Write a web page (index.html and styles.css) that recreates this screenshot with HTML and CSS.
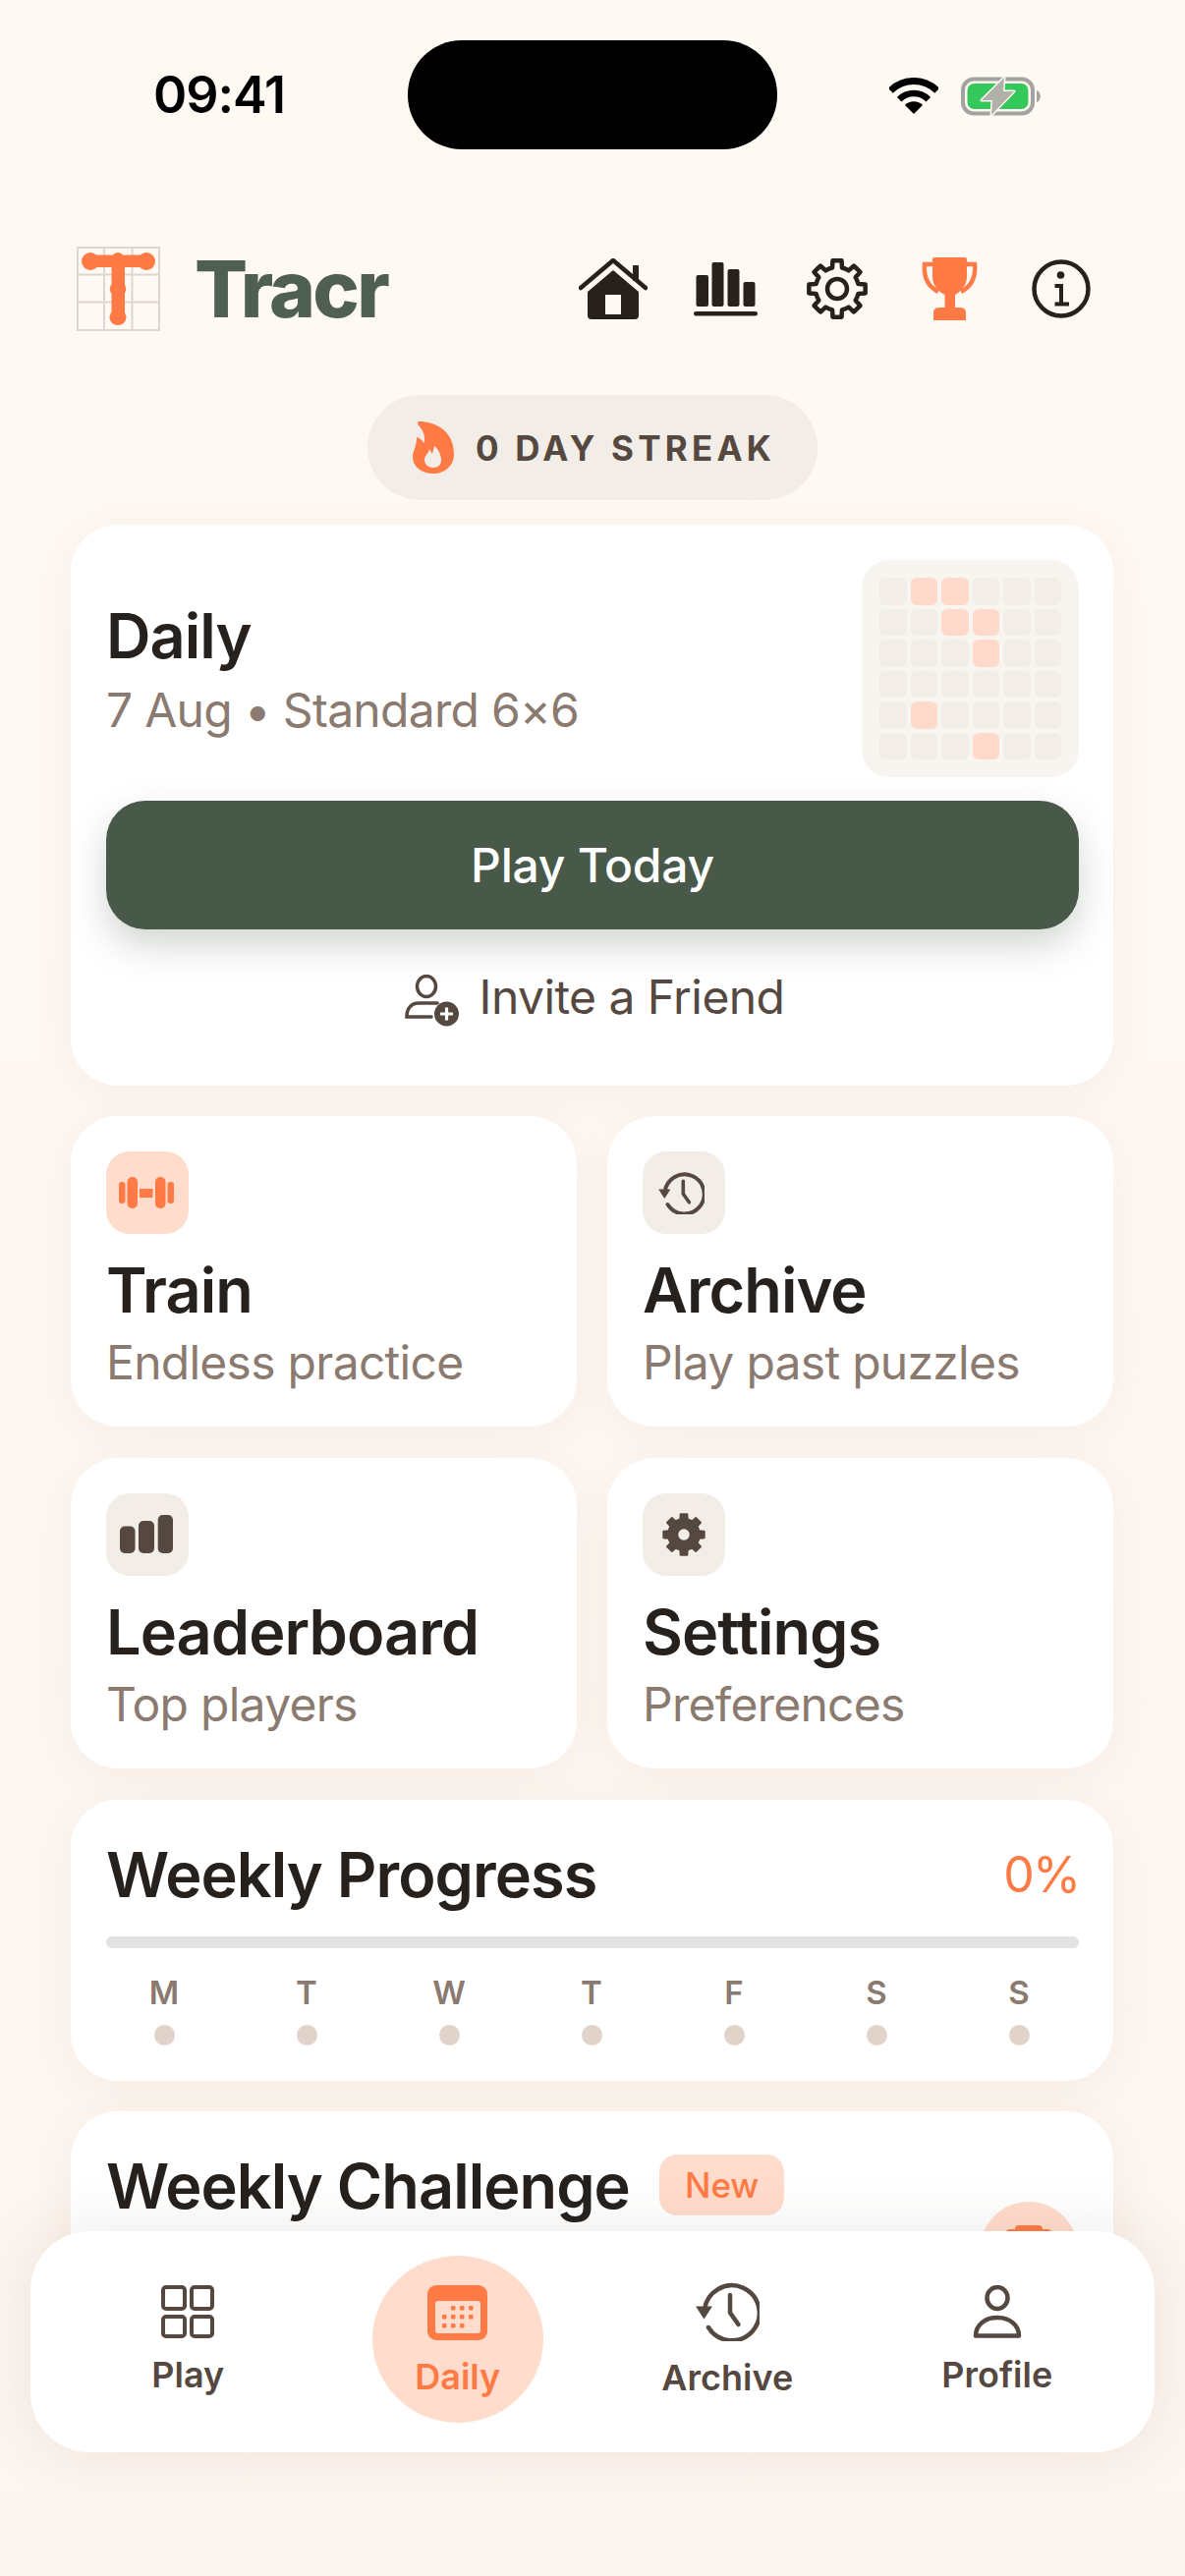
FILE: index.html
```html
<!DOCTYPE html>
<html lang="en">
<head>
  <meta charset="UTF-8" />
  <meta name="viewport" content="width=device-width, initial-scale=1.0" />
  <title>Tracr</title>
  <link rel="stylesheet" href="styles.css">
</head>
<body>
  <div class="status-bar">
    <span class="time">09:41</span>
    <div class="island"></div>
    <div class="status-icons">
      <svg width="50" height="37" viewBox="0 0 50 37">
        <path d="M1.3 13.3A33.5 33.5 0 0 1 48.7 13.3" fill="none" stroke="#000" stroke-width="7"/>
        <path d="M10.2 22.2A21 21 0 0 1 39.8 22.2" fill="none" stroke="#000" stroke-width="6.5"/>
        <path d="M25 37L16 28A12.7 12.7 0 0 1 34 28Z" fill="#000"/>
      </svg>
      <svg width="82" height="40" viewBox="0 0 82 40">
        <rect x="2" y="2.5" width="71" height="35" rx="11" fill="none" stroke="#a5a39f" stroke-width="4"/>
        <rect x="6.5" y="7" width="62" height="26" rx="7" fill="#34c759"/>
        <path d="M77 14C82 15 82 25 77 26Z" fill="#a5a39f"/>
        <path d="M44 1L21 24H32L31 39L54 15H43Z" fill="#b2b0aa" stroke="#fff8f3" stroke-width="3" paint-order="stroke" stroke-linejoin="round"/>
      </svg>
    </div>
  </div>

  <header class="top-header">
    <div class="brand">
      <svg class="logo" width="85" height="86" viewBox="0 0 85 86">
        <g fill="none" stroke="#ddd6d3" stroke-width="2">
          <rect x="1" y="1" width="83" height="84"/>
          <path d="M28 1V85M56.5 1V85M1 28.5H84M1 56.5H84"/>
        </g>
        <g fill="#ff7a45">
          <rect x="12" y="8.5" width="60" height="12.5"/>
          <rect x="35.5" y="12" width="13.5" height="58"/>
          <circle cx="14" cy="15" r="9"/>
          <circle cx="71" cy="15" r="9"/>
          <circle cx="42" cy="12" r="6"/>
          <ellipse cx="42" cy="43" rx="8.3" ry="7.5"/>
          <ellipse cx="42" cy="72" rx="8.5" ry="8"/>
        </g>
      </svg>
      <span class="brand-name">Tracr</span>
    </div>
    <nav class="top-nav">
      <svg width="70" height="62" viewBox="0 0 70 62">
        <path d="M2 30L35 2L68 30" fill="none" stroke="#26211d" stroke-width="4.5" stroke-linecap="round" stroke-linejoin="round"/>
        <rect x="55" y="7" width="6" height="16" rx="1" fill="#26211d"/>
        <path fill-rule="evenodd" d="M35 12L61 34V58Q61 62 57 62H13Q9 62 9 58V34ZM27 37V57H43V37Z" fill="#26211d"/>
      </svg>
      <svg width="65" height="55" viewBox="0 0 65 55" fill="#26211d">
        <rect x="2.5" y="13" width="12.5" height="32" rx="2"/>
        <rect x="18.5" y="0" width="12" height="45" rx="2"/>
        <rect x="34.5" y="7" width="12" height="38" rx="2"/>
        <rect x="50.5" y="20" width="12" height="25" rx="2"/>
        <rect x="0" y="50" width="65" height="4.5" rx="2.2"/>
      </svg>
      <svg width="64" height="64" viewBox="-32 -32 64 64">
        <path d="M-4.95 -21.44L-4.54 -28.64H4.54L4.95 -21.44A22 22 0 0 1 11.66 -18.66L17.04 -23.46L23.46 -17.04L18.66 -11.66A22 22 0 0 1 21.44 -4.95L28.64 -4.54V4.54L21.44 4.95A22 22 0 0 1 18.66 11.66L23.46 17.04L17.04 23.46L11.66 18.66A22 22 0 0 1 4.95 21.44L4.54 28.64H-4.54L-4.95 21.44A22 22 0 0 1 -11.66 18.66L-17.04 23.46L-23.46 17.04L-18.66 11.66A22 22 0 0 1 -21.44 4.95L-28.64 4.54V-4.54L-21.44 -4.95A22 22 0 0 1 -18.66 -11.66L-23.46 -17.04L-17.04 -23.46L-11.66 -18.66A22 22 0 0 1 -4.95 -21.44Z" fill="none" stroke="#26211d" stroke-width="4.5" stroke-linejoin="round"/>
        <circle r="10" fill="none" stroke="#26211d" stroke-width="4.5"/>
      </svg>
      <svg width="57" height="64" viewBox="0 0 57 64">
        <path d="M13 0H44Q46 0 46 2V20C46 30 38 36 34 38V51H38Q45 51 45 56V64H12V56Q12 51 19 51H23.5V38C19 36 11 30 11 20V2Q11 0 13 0Z" fill="#ff7a45"/>
        <path d="M11 7H3C2 18 5 29 17 35M46 7H54C55 18 52 29 40 35" fill="none" stroke="#ff7a45" stroke-width="4.5"/>
      </svg>
      <svg width="60" height="60" viewBox="0 0 60 60">
        <circle cx="30" cy="30" r="27.5" fill="none" stroke="#26211d" stroke-width="4.5"/>
        <circle cx="29.5" cy="16" r="3.8" fill="#26211d"/>
        <path d="M23.5 27H30V45M23.5 45.5H38" fill="none" stroke="#26211d" stroke-width="4"/>
      </svg>
    </nav>
  </header>

  <div class="streak-wrap">
    <div class="streak">
      <svg width="42" height="53" viewBox="0 0 42 53">
        <path d="M6 0C24 0 42 10 42 33C42 45 33 53 21 53C9 53 0 46 0 36C0 30 4 26 4 16C8 17 10 20 12 22C13 14 10 8 6 4Q4 1 6 0Z" fill="#ff7a45"/>
        <path d="M21 47C15 47 12 43 12 39C12 35 16 33 17 28L20 33L22 25C27 29 29 35 29 39C29 44 26 47 21 47Z" fill="#f3ede8"/>
      </svg>
      <span>0 DAY STREAK</span>
    </div>
  </div>

  <main class="content">
    <section class="card daily">
      <div class="daily-top">
        <div>
          <div class="title">Daily</div>
          <div class="sub">7 Aug • Standard 6×6</div>
        </div>
        <div class="mini-grid">
          <i></i><i class="on"></i><i class="on"></i><i></i><i></i><i></i>
          <i></i><i></i><i class="on"></i><i class="on"></i><i></i><i></i>
          <i></i><i></i><i></i><i class="on"></i><i></i><i></i>
          <i></i><i></i><i></i><i></i><i></i><i></i>
          <i></i><i class="on"></i><i></i><i></i><i></i><i></i>
          <i></i><i></i><i></i><i class="on"></i><i></i><i></i>
        </div>
      </div>
      <button class="play-btn">Play Today</button>
      <div class="invite">
        <svg width="55" height="53" viewBox="0 0 55 53">
          <ellipse cx="22" cy="12" rx="9.5" ry="10.5" fill="none" stroke="#554840" stroke-width="3.5"/>
          <path d="M33 29H14C7 29 2 34 2 43H27" fill="none" stroke="#554840" stroke-width="3.5" stroke-linecap="round"/>
          <circle cx="42.5" cy="40" r="12.5" fill="#554840"/>
          <path d="M42.5 33.5V46.5M36 40H49" stroke="#fff" stroke-width="3.2"/>
        </svg>
        <span>Invite a Friend</span>
      </div>
    </section>

    <div class="tile-grid">
      <section class="card tile">
        <div class="tile-icon peach">
          <svg width="84" height="84" viewBox="0 0 84 84" fill="#ff7a45">
            <rect x="13" y="31" width="6.5" height="22" rx="3"/>
            <rect x="21.5" y="26" width="10.5" height="32" rx="5"/>
            <rect x="34" y="38" width="13.5" height="9"/>
            <rect x="50" y="26" width="10.5" height="32" rx="5"/>
            <rect x="62.5" y="31" width="6.5" height="22" rx="3"/>
          </svg>
        </div>
        <div class="title">Train</div>
        <div class="sub">Endless practice</div>
      </section>
      <section class="card tile">
        <div class="tile-icon">
          <svg class="clock-small" width="47" height="43" viewBox="0 0 65 60">
            <path d="M9 28A28 28 0 1 1 13 46" fill="none" stroke="#554840" stroke-width="5.5" stroke-linecap="round"/>
            <path d="M0 24.5H17L8.5 37.5Z" fill="#554840"/>
            <path d="M35 13V31L43.5 43" fill="none" stroke="#554840" stroke-width="5" stroke-linecap="round" stroke-linejoin="round"/>
          </svg>
        </div>
        <div class="title">Archive</div>
        <div class="sub">Play past puzzles</div>
      </section>
      <section class="card tile">
        <div class="tile-icon">
          <svg width="84" height="84" viewBox="0 0 84 84" fill="#554840">
            <rect x="14" y="33.5" width="15.5" height="27.5" rx="5"/>
            <rect x="33" y="28" width="16" height="33" rx="5"/>
            <rect x="52.7" y="22" width="15.3" height="39" rx="5"/>
          </svg>
        </div>
        <div class="title">Leaderboard</div>
        <div class="sub">Top players</div>
      </section>
      <section class="card tile">
        <div class="tile-icon">
          <svg width="46" height="46" viewBox="-32 -32 64 64">
            <path fill-rule="evenodd" d="M-4.95 -21.44L-4.54 -28.64H4.54L4.95 -21.44A22 22 0 0 1 11.66 -18.66L17.04 -23.46L23.46 -17.04L18.66 -11.66A22 22 0 0 1 21.44 -4.95L28.64 -4.54V4.54L21.44 4.95A22 22 0 0 1 18.66 11.66L23.46 17.04L17.04 23.46L11.66 18.66A22 22 0 0 1 4.95 21.44L4.54 28.64H-4.54L-4.95 21.44A22 22 0 0 1 -11.66 18.66L-17.04 23.46L-23.46 17.04L-18.66 11.66A22 22 0 0 1 -21.44 4.95L-28.64 4.54V-4.54L-21.44 -4.95A22 22 0 0 1 -18.66 -11.66L-23.46 -17.04L-17.04 -23.46L-11.66 -18.66A22 22 0 0 1 -4.95 -21.44ZM0 -9.5A9.5 9.5 0 1 0 0 9.5A9.5 9.5 0 1 0 0 -9.5Z" fill="#554840" stroke="#554840" stroke-width="3" stroke-linejoin="round"/>
          </svg>
        </div>
        <div class="title">Settings</div>
        <div class="sub">Preferences</div>
      </section>
    </div>

    <section class="card weekly">
      <div class="weekly-head">
        <div class="title">Weekly Progress</div>
        <div class="percent">0%</div>
      </div>
      <div class="progress"></div>
      <div class="days">
        <div class="day"><span>M</span><i></i></div>
        <div class="day"><span>T</span><i></i></div>
        <div class="day"><span>W</span><i></i></div>
        <div class="day"><span>T</span><i></i></div>
        <div class="day"><span>F</span><i></i></div>
        <div class="day"><span>S</span><i></i></div>
        <div class="day"><span>S</span><i></i></div>
      </div>
    </section>

    <section class="card challenge">
      <div class="title">Weekly Challenge</div>
      <span class="badge">New</span>
      <div class="challenge-icon">
        <svg width="46" height="40" viewBox="0 0 46 40" fill="#ff7a45">
          <rect x="9" y="0" width="28" height="12" rx="4"/>
          <rect x="0" y="4" width="46" height="36" rx="4"/>
        </svg>
      </div>
    </section>
  </main>

  <nav class="tab-bar">
    <div class="tab">
      <svg width="54" height="54" viewBox="0 0 54 54" fill="none" stroke="#554840" stroke-width="4">
        <rect x="2" y="2" width="22" height="22" rx="3"/>
        <rect x="31" y="2" width="21" height="22" rx="3"/>
        <rect x="2" y="32" width="22" height="20" rx="3"/>
        <rect x="31" y="32" width="21" height="20" rx="3"/>
      </svg>
      <span>Play</span>
    </div>
    <div class="tab active">
      <svg width="61" height="56" viewBox="0 0 61 56">
        <rect width="61" height="56" rx="9" fill="#ff7a45"/>
        <rect x="8" y="16" width="46" height="33" rx="3" fill="#ffdccb"/>
        <g fill="#ff7a45">
          <rect x="24" y="21" width="4.5" height="4.5" rx="1"/><rect x="33" y="21" width="4.5" height="4.5" rx="1"/><rect x="42" y="21" width="4.5" height="4.5" rx="1"/>
          <rect x="15" y="30" width="4.5" height="4.5" rx="1"/><rect x="24" y="30" width="4.5" height="4.5" rx="1"/><rect x="33" y="30" width="4.5" height="4.5" rx="1"/><rect x="42" y="30" width="4.5" height="4.5" rx="1"/>
          <rect x="15" y="39" width="4.5" height="4.5" rx="1"/><rect x="24" y="39" width="4.5" height="4.5" rx="1"/><rect x="33" y="39" width="4.5" height="4.5" rx="1"/>
        </g>
      </svg>
      <span>Daily</span>
    </div>
    <div class="tab">
      <svg width="65" height="60" viewBox="0 0 65 60">
        <path d="M9 28A28 28 0 1 1 13 46" fill="none" stroke="#554840" stroke-width="4.5" stroke-linecap="round"/>
        <path d="M0 24.5H17L8.5 37.5Z" fill="#554840"/>
        <path d="M35 13V31L43.5 43" fill="none" stroke="#554840" stroke-width="4.5" stroke-linecap="round" stroke-linejoin="round"/>
      </svg>
      <span>Archive</span>
    </div>
    <div class="tab">
      <svg width="50" height="54" viewBox="0 0 50 54" fill="none" stroke="#554840" stroke-width="4.5" stroke-linejoin="round">
        <ellipse cx="25" cy="13" rx="10.5" ry="11"/>
        <path d="M3 51.5C3 40 13 33 25 33C37 33 47 40 47 51.5Z"/>
      </svg>
      <span>Profile</span>
    </div>
  </nav>
</body>
</html>
```
FILE: styles.css
```css
* { box-sizing: border-box; }
html, body { margin: 0; padding: 0; }
body { position: relative; width: 1206px; height: 2622px; overflow: hidden; padding-top: 41px; font-family: Inter, "Noto Sans", sans-serif; color: #26211d; background: linear-gradient(#fff9f4, #fdf5ef); }

.status-bar { display: flex; align-items: center; height: 111px; padding-left: 156px; }
.time { width: 259px; font-size: 52px; font-weight: 600; color: #000; letter-spacing: -0.02em; }
.island { width: 376px; height: 111px; border-radius: 55px; background: #000; }
.status-icons { display: flex; align-items: center; gap: 23px; margin-left: 114px; margin-top: 2px; }

.top-header { display: flex; justify-content: space-between; align-items: center; height: 86px; margin-top: 99px; padding: 0 69px 0 78px; }
.brand { display: flex; align-items: center; gap: 35px; }
.logo { display: block; }
.brand-name { font-size: 80px; font-weight: 800; color: #4f6052; letter-spacing: -0.035em; line-height: 86px; }
.top-nav { display: grid; grid-template-columns: repeat(5, 114px); justify-items: center; align-items: center; }

.streak-wrap { display: flex; justify-content: center; margin-top: 65px; }
.streak { display: flex; align-items: center; gap: 22px; height: 107px; padding: 0 43px 0 46px; border-radius: 54px; background: #f3ede8; font-size: 35px; font-weight: 700; letter-spacing: 0.12em; color: #554840; }

.content { display: flex; flex-direction: column; gap: 31px; margin: 25px 73px 0 72px; }
.card { background: #fff; border-radius: 48px; box-shadow: 0 8px 44px rgba(120, 80, 50, 0.06); }
.title { font-size: 63px; line-height: 72px; font-weight: 600; letter-spacing: -0.015em; color: #26211d; }
.sub { font-size: 48px; line-height: 56px; letter-spacing: -0.015em; color: #8a7a70; }

.daily { height: 571px; padding: 36px 35px 0 36px; }
.daily-top { display: flex; justify-content: space-between; align-items: center; }
.daily-top .title { margin-bottom: 12px; }
.mini-grid { display: grid; grid-template-columns: repeat(6, 27.5px); grid-auto-rows: 27.5px; gap: 4px; padding: 18px; border-radius: 28px; background: #f8f5f1; }
.mini-grid i { border-radius: 6px; background: #f3ede8; }
.mini-grid i.on { background: #ffd9c9; }
.play-btn { display: block; width: 100%; height: 131px; margin-top: 24px; border: none; border-radius: 40px; background: #485849; color: #fff; font-family: inherit; font-size: 48px; font-weight: 500; letter-spacing: -0.005em; box-shadow: 0 16px 36px rgba(74, 90, 76, 0.25); }
.invite { display: flex; justify-content: center; align-items: center; gap: 21px; height: 53px; margin-top: 46px; padding-left: 4px; font-size: 48px; letter-spacing: -0.012em; color: #554840; }
.invite span { margin-top: -8px; }

.tile-grid { display: grid; grid-template-columns: 1fr 1fr; gap: 32px 31px; }
.tile { height: 316px; padding: 36px; }
.tile-icon { display: flex; justify-content: center; align-items: center; width: 84px; height: 84px; margin-bottom: 21px; border-radius: 24px; background: #f3ede8; }
.tile-icon.peach { background: #ffdccb; }
.clock-small { margin-right: 5px; }
.tile .title { margin-bottom: 10px; }

.weekly { height: 286px; margin-top: 1px; padding: 40px 35px 0 36px; }
.weekly-head { display: flex; justify-content: space-between; align-items: center; }
.percent { font-size: 50px; letter-spacing: -0.04em; color: #ff7a45; }
.progress { height: 12px; margin-top: 27px; border-radius: 6px; background: #e3e3e3; }
.days { display: grid; grid-template-columns: repeat(7, 1fr); gap: 25px; margin: 25px 1px 0 -1px; }
.day { display: flex; flex-direction: column; align-items: center; gap: 13px; }
.day span { font-size: 33px; line-height: 40px; font-weight: 600; color: #8a7a70; }
.day i { width: 21px; height: 21px; border-radius: 50%; background: #e2d3ca; }

.challenge { display: flex; align-items: flex-start; height: 300px; padding: 40px 36px 0 36px; }
.badge { height: 62px; margin: 4px 0 0 30px; padding: 0 26px; border-radius: 18px; background: #ffdccb; color: #ff7a45; font-size: 35px; font-weight: 500; line-height: 62px; }
.challenge-icon { display: flex; justify-content: center; width: 100px; height: 100px; margin: 52px 0 0 auto; padding-top: 24px; border-radius: 50%; background: #ffdccb; }

.tab-bar { position: absolute; left: 31px; top: 2271px; display: grid; grid-template-columns: repeat(4, 1fr); align-items: center; justify-items: center; width: 1144px; height: 225px; padding: 0 23px 5px; border-radius: 60px; background: #fff; box-shadow: 0 0 64px rgba(90, 60, 40, 0.1); }
.tab { display: flex; flex-direction: column; align-items: center; gap: 17px; font-size: 36px; line-height: 40px; font-weight: 600; color: #554840; }
.tab svg { display: block; }
.tab.active { justify-content: center; width: 174px; height: 170px; padding-top: 3px; border-radius: 50%; background: #ffdccb; color: #ff7a45; }
```
